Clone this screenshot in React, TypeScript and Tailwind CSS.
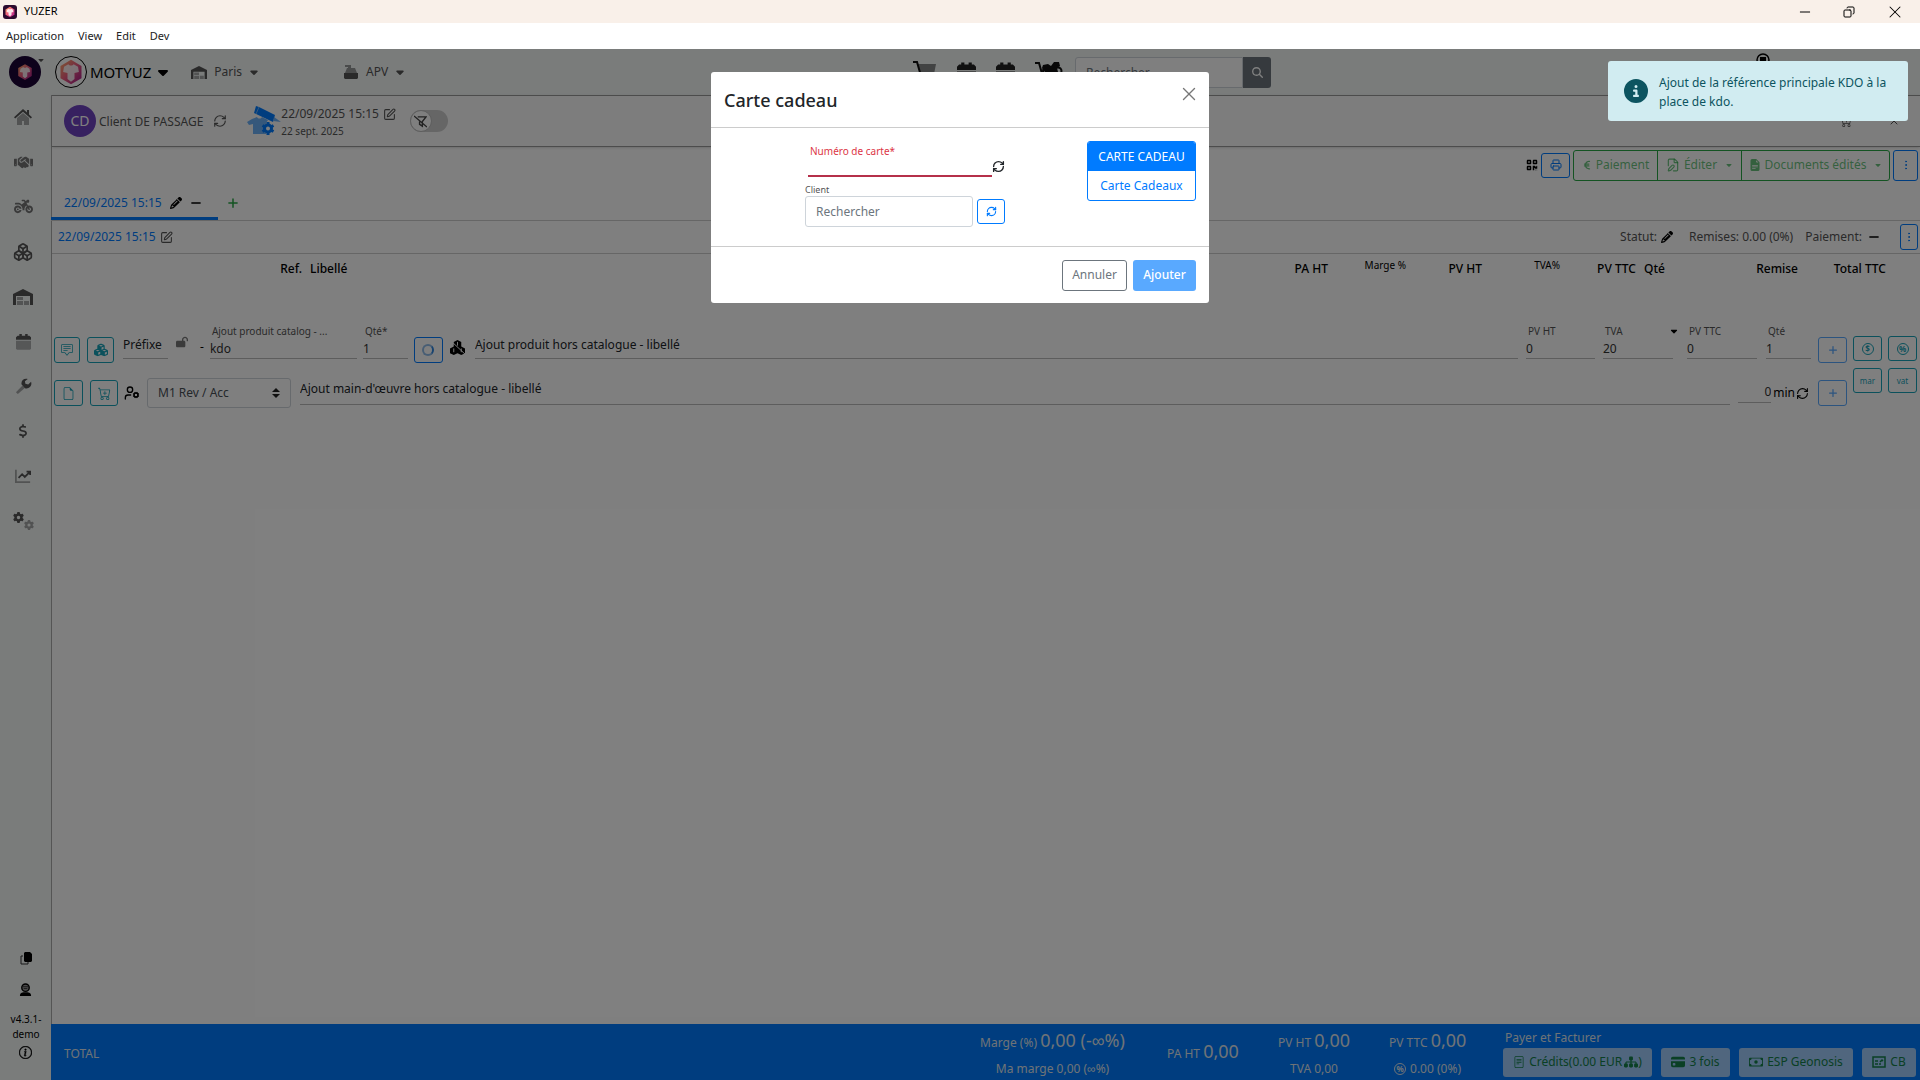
import type { ReactNode } from "react";
import {
  FaCaretDown,
  FaCircleInfo,
  FaCubes,
  FaDollarSign,
  FaEuroSign,
  FaGear,
  FaHandshake,
  FaLockOpen,
  FaMagnifyingGlass,
  FaMinus,
  FaMotorcycle,
  FaPencil,
  FaPlus,
  FaQrcode,
  FaSitemap,
} from "react-icons/fa6";
import {
  Boxes,
  Copy,
  EllipsisVertical,
  FilePen,
  Minus,
  Printer,
  RefreshCw,
  SquarePen,
  UserCog,
  X,
} from "lucide-react";
import {
  BsCash,
  BsCartPlus,
  BsChatSquareText,
  BsCreditCardFill,
  BsFileEarmark,
  BsFileEarmarkTextFill,
  BsFileText,
  BsInfoCircle,
} from "react-icons/bs";

const Hexagon = ({ className }: { className: string }) => (
  <svg viewBox="0 0 32 32" className={className}>
    <defs>
      <linearGradient id="hexa" x1="0" y1="0" x2="1" y2="1">
        <stop offset="0" stopColor="#ffb066" />
        <stop offset="0.45" stopColor="#f0607e" />
        <stop offset="1" stopColor="#a3168c" />
      </linearGradient>
    </defs>
    <path d="M16 2 28 9v14l-12 7L4 23V9z" fill="url(#hexa)" />
    <path
      d="M8 10l5-3c1 2 5 2 6 0l5 3 1 6-5 1v7l-4 3-4-3v-7l-5-1z"
      fill="#fff"
      fillOpacity="0.85"
    />
  </svg>
);

const House = () => (
  <svg viewBox="0 0 20 18" className="w-5 h-[18px]" fill="#555">
    <path d="M4 10v7h5v-4h2v4h5v-7l-6-5z" opacity="0.5" />
    <path d="M10 1 1 9.3l1.2 1.3L10 3.8l7.8 6.8L19 9.3l-3-2.8V2h-2v2.600z" />
  </svg>
);

const Warehouse = ({ className }: { className: string }) => (
  <svg viewBox="0 0 20 16" className={className} fill="#555">
    <path d="M0 16V5l10-5 10 5v11h-3V7H3v9z" />
    <path d="M4 8h6v3H4zM4 12h6v4H4zM11 12h5v4h-5z" opacity="0.5" />
  </svg>
);

const Calendar = ({ className, mark }: { className: string; mark?: boolean }) => (
  <svg viewBox="0 0 18 20" className={className} fill="currentColor">
    <path d="M2 3h2V1h3v2h4V1h3v2h2l2 2v3H0V5z" />
    <path d="M0 9h18v9l-1 2H1l-1-2z" opacity="0.45" />
    {mark && <path d="M11 10l-5 6h3v3l5-6h-3z" fill="#fff" />}
  </svg>
);

const Wrench = () => (
  <svg viewBox="0 0 18 18" className="w-[17px] h-[17px]" fill="#555">
    <path d="M8 8 1 15l2 2 8-7z" opacity="0.5" />
    <path d="M17 4l-3 3-3-1-.5-2.500L13.500 1C9 0 6 3 7 7l4 4c4 1 7.500-3 6-7z" />
  </svg>
);

const Chart = () => (
  <svg viewBox="0 0 18 16" className="w-4 h-4" fill="none" stroke="#555" strokeWidth="2">
    <path d="M1 1v14h16" opacity="0.5" />
    <path d="M4 10l4-4 3 3 6-6M13 3h4v4" />
  </svg>
);

const Cogs = () => (
  <span className="flex text-[#555]">
    <FaGear className="size-[11px]" />
    <FaGear className="size-[10px] mt-2 opacity-50" />
  </span>
);

const CashRegister = () => (
  <svg viewBox="0 0 14 14" className="size-[14px]" fill="#555">
    <path d="M1 0h6v3h4l2 5H1l2-5h1V2H1z" opacity="0.6" />
    <path d="M0 8h14v5l-1 1H1l-1-1z" />
  </svg>
);

const Cart = () => (
  <svg viewBox="0 0 24 22" className="w-6 h-[22px]">
    <path d="M5 3h18l-2 10H7z" fill="#555" opacity="0.7" />
    <path d="M0 1h4l4 14h13" fill="none" stroke="#111" strokeWidth="2" />
    <circle cx="9" cy="19" r="2" />
    <circle cx="18" cy="19" r="2" />
  </svg>
);

const MotoCart = () => (
  <svg viewBox="0 0 28 22" className="h-[22px] w-7">
    <path d="M0 2h4l4 14h14" fill="none" stroke="#111" strokeWidth="2" />
    <path d="M8 4l5-1 3 2 3-4h5l1 4-3 2 1 4H10L7 7z" fill="#111" />
    <circle cx="11" cy="10" r="3" fill="none" stroke="#111" strokeWidth="2" />
    <circle cx="23" cy="10" r="3.500" fill="none" stroke="#111" strokeWidth="2" />
    <circle cx="9" cy="20" r="2" />
    <circle cx="19" cy="20" r="2" />
  </svg>
);

const Workshop = () => (
  <svg viewBox="0 0 34 30" className="w-[34px] h-[30px]">
    <path d="M9 0l3 1 16 8-2 7L7 7z" fill="#007bff" />
    <path d="M12 1l-3 7" stroke="#6db0f7" strokeWidth="1" />
    <path d="M5 13l5-2c1 2 4 2 5 0l6 3-2 3v11H6V18l-4 1-2-3z" fill="#6db0f7" />
    <path d="M27 11l7 5-8-1z" fill="#6db0f7" />
    <g stroke="#007bff" strokeWidth="3">
      <path d="M21 16v13M15.500 19.500l11 6M26.500 19.500l-11 6" />
    </g>
    <circle cx="21" cy="22.500" r="3.500" fill="#fff" stroke="#007bff" strokeWidth="3" />
  </svg>
);

const FilterSlash = () => (
  <svg viewBox="0 0 14 14" className="size-[13px]" fill="none" stroke="#444" strokeWidth="1.500">
    <path d="M4 2h9L9 7v5L6 10V7M0 1l14 12" />
  </svg>
);

const CopyIcon = () => (
  <svg viewBox="0 0 12 13" className="mb-[18px] h-[13px] w-3">
    <path d="M3 4H1v8h7v-2" fill="none" stroke="#333" strokeWidth="1" />
    <path d="M5 0h5l2 2v7l-1 1H5L4 9V1z" />
  </svg>
);

const CardTerminal = () => (
  <svg viewBox="0 0 14 12" className="h-3 w-[14px]" fill="none" stroke="currentColor">
    <path d="M1 1h12v10H1zM3 8h3M7 8h2M3 5h3M8 6l2-2 1 1" strokeWidth="1.500" />
  </svg>
);

const Coin = ({ sign }: { sign: string }) => (
  <span className="flex size-3 items-center justify-center rounded-full border border-current text-[8px] font-bold">
    {sign}
  </span>
);

type ButtonProps = { children: ReactNode; className: string; label?: string };

const OutlineButton = ({ children, className, label }: ButtonProps) => (
  <button
    type="button"
    aria-label={label}
    className={`flex shrink-0 items-center justify-center rounded-[3px] border ${className}`}
  >
    {children}
  </button>
);

type FieldProps = { id: string; label: string; value: string; className: string };

const Field = ({ id, label, value, className }: FieldProps) => (
  <div className={`mb-1 flex shrink-0 flex-col border-b border-[#bbb] ${className}`}>
    <label htmlFor={id} className="pl-0.5 text-[10px] leading-[14px] text-[#555] whitespace-nowrap">
      {label}
    </label>
    <input id={id} defaultValue={value} className="h-5 w-full text-xs text-[#333] outline-none" />
  </div>
);

const EmptyField = ({ label, className }: { label: string; className: string }) => (
  <input
    aria-label={label}
    placeholder={label}
    className={`mb-1 border-b border-[#bbb] text-xs outline-none placeholder:text-[#212529] ${className}`}
  />
);

const menu = ["Application", "View", "Edit", "Dev"];

const Sidebar = () => (
  <nav className="flex w-[52px] shrink-0 flex-col items-center border-r border-[#aaa] bg-[#f4f8f7] pr-[5px] text-[#555]">
    <div className="grid h-[448px] grid-rows-10 place-items-center">
      <House />
      <FaHandshake className="size-[19px] opacity-80" />
      <FaMotorcycle className="size-[19px] opacity-80" />
      <Boxes className="size-5" />
      <Warehouse className="w-5 h-4" />
      <Calendar className="w-[15px] h-[17px]" />
      <Wrench />
      <FaDollarSign className="size-[14px]" />
      <Chart />
      <Cogs />
    </div>
    <div className="mt-auto flex flex-col items-center pb-[21px] pl-1.5 text-[10px] leading-[15px] text-black">
      <CopyIcon />
      <svg viewBox="0 0 14 14" className="mb-4 size-[13px]">
        <circle cx="7" cy="5" r="4" fill="#999" stroke="#000" strokeWidth="1.500" />
        <path d="M4 4h6M5 6h4" stroke="#333" strokeWidth="1" />
        <path d="M1 14c0-4 3-4 6-4s6 0 6 4z" />
      </svg>
      <span>v4.3.1-</span>
      <span>demo</span>
      <BsInfoCircle className="mt-1 size-[13px]" strokeWidth={0.5} />
    </div>
  </nav>
);

const TopBar = () => (
  <header className="flex h-[46px] shrink-0 items-center bg-[#f4f8f7] text-xs text-[#555]">
    <div className="flex w-[55px] pl-[9px]">
      <span className="flex size-8 items-center justify-center rounded-full bg-[#1c0436]">
        <Hexagon className="size-[18px]" />
      </span>
      <FaCaretDown className="-ml-1 size-2" />
    </div>
    <button type="button" className="flex items-center text-[15px] text-black">
      <span className="mr-[3px] flex size-8 items-center justify-center rounded-full border border-black bg-white">
        <Hexagon className="size-7" />
      </span>
      MOTYUZ
      <FaCaretDown className="ml-1 size-4" />
    </button>
    <button type="button" className="ml-5 flex items-center">
      <Warehouse className="mr-[7px] w-4 h-[13px]" />
      Paris
      <FaCaretDown className="ml-1.5 size-3" />
    </button>
    <button type="button" className="ml-[84px] flex items-center">
      <CashRegister />
      <span className="ml-2">APV</span>
      <FaCaretDown className="ml-1.5 size-3" />
    </button>
    <div className="absolute left-1/2 flex -translate-x-[47px] items-center gap-5 text-[#222]">
      <Cart />
      <Calendar className="w-[19px] h-[22px]" />
      <Calendar className="w-[19px] h-[22px]" mark />
      <MotoCart />
      <form className="-ml-2 flex">
        <input
          aria-label="Rechercher"
          placeholder="Rechercher"
          className="h-[31px] w-[168px] rounded-l-[3px] border border-[#ced4da] bg-white px-2.5 text-xs placeholder:text-[#6c757d]"
        />
        <button
          type="button"
          aria-label="Lancer la recherche"
          className="flex h-[31px] w-7 items-center justify-center rounded-r-[3px] bg-[#6c757d] text-white"
        >
          <FaMagnifyingGlass className="size-[11px]" />
        </button>
      </form>
    </div>
    <svg viewBox="0 0 14 14" className="mr-[150px] mb-6 ml-auto size-[14px]">
      <circle cx="7" cy="7" r="6" fill="none" stroke="#000" strokeWidth="1.500" />
      <path d="M4 4h6v4H4z" />
    </svg>
  </header>
);

const ClientBar = () => (
  <div className="flex h-[52px] shrink-0 items-center border-y border-[#999] bg-[#fbfbfb] pl-3 text-xs text-[#555] shadow-sm">
    <span className="flex size-8 items-center justify-center rounded-full bg-[#6f42c1] text-sm text-white">
      CD
    </span>
    <span className="mt-0.5 ml-[3px]">Client DE PASSAGE</span>
    <RefreshCw className="ml-2.5 size-[14px]" />
    <span className="ml-5">
      <Workshop />
    </span>
    <div className="flex flex-col pt-0.5 leading-[18px]">
      <span className="flex items-center gap-1">
        22/09/2025 15:15 <SquarePen className="size-[13px]" />
      </span>
      <span className="text-[10px] leading-4">22 sept. 2025</span>
    </div>
    <button
      type="button"
      role="switch"
      aria-checked="false"
      aria-label="Filtre"
      className="ml-[14px] flex h-[22px] w-[38px] items-center rounded-full bg-[#ccc]"
    >
      <span className="flex size-[22px] items-center justify-center rounded-full border border-[#bbb] bg-white">
        <FilterSlash />
      </span>
    </button>
    <div className="ml-auto flex items-center gap-9 pr-5">
      <BsCartPlus className="size-3" />
      <X className="size-3" />
    </div>
  </div>
);

const Toolbar = () => (
  <div className="flex h-9 shrink-0 items-center justify-end gap-[3px] pr-0.5 text-xs text-[#28a745]">
    <FaQrcode className="size-3 text-black" />
    <OutlineButton label="Imprimer" className="h-[25px] w-[29px] border-[#007bff] text-[#007bff]">
      <Printer className="size-3" />
    </OutlineButton>
    <div className="flex h-[31px] divide-x divide-[#28a745] rounded-[3px] border border-[#28a745]">
      <button type="button" className="flex w-[84px] items-center justify-center gap-1 text-[#28a745]/70">
        <FaEuroSign className="size-[10px]" /> Paiement
      </button>
      <button type="button" className="flex w-[84px] items-center justify-center gap-1 text-[#28a745]/70">
        <FilePen className="size-[14px]" /> Éditer <FaCaretDown className="ml-1 size-2" />
      </button>
      <button type="button" className="flex w-[147px] items-center justify-center gap-1 text-[#28a745]/70">
        <BsFileEarmarkTextFill className="size-3" /> Documents édités
        <FaCaretDown className="ml-1 size-2" />
      </button>
    </div>
    <OutlineButton label="Plus" className="h-[31px] w-[25px] border-[#007bff] text-[#007bff]">
      <EllipsisVertical className="size-3" />
    </OutlineButton>
  </div>
);

const Tabs = () => (
  <div className="-ml-px flex h-[38px] shrink-0 items-end border-b border-[#ccc] text-xs">
    <div className="flex h-8 w-[167px] items-center gap-2 border-b-3 border-[#007bff] pl-[13px]">
      <a href="#devis" className="text-[#007bff]">
        22/09/2025 15:15
      </a>
      <FaPencil className="size-3" />
      <FaMinus className="size-3" />
    </div>
    <button type="button" aria-label="Ajouter un onglet" className="mb-[11px] ml-[9px] text-[#28a745]">
      <FaPlus className="size-3" />
    </button>
  </div>
);

const StatusRow = () => (
  <div className="flex h-[33px] shrink-0 items-center border-b border-[#ccc] pr-0.5 pl-1.5 text-xs text-[#555]">
    <a href="#devis" className="mr-1 text-[#007bff]">
      22/09/2025 15:15
    </a>
    <SquarePen className="size-[13px]" />
    <span className="ml-auto">Statut:</span>
    <FaPencil className="ml-1 size-3 text-black" />
    <span className="ml-4">Remises: 0.00 (0%)</span>
    <span className="ml-3">Paiement:</span>
    <FaMinus className="ml-1.5 size-3 text-black" />
    <OutlineButton label="Options" className="ml-5 h-[26px] w-[18px] border-[#007bff] text-[#007bff]">
      <EllipsisVertical className="size-3" />
    </OutlineButton>
  </div>
);

const LinesTable = () => (
  <table className="w-full table-fixed text-xs text-black">
    <thead>
      <tr className="h-[30px] *:px-1 *:text-right *:font-medium">
        <th className="w-[254px]">Ref.</th>
        <th className="text-left!">Libellé</th>
        <th className="w-20">PA HT</th>
        <th className="w-[78px] pb-1.5 text-[10px] font-normal!">Marge %</th>
        <th className="w-[76px]">PV HT</th>
        <th className="w-[78px] pb-1.5 text-[10px] font-normal!">TVA%</th>
        <th className="w-[76px]">PV TTC</th>
        <th className="w-20 text-left!">Qté</th>
        <th className="w-[82px]">Remise</th>
        <th className="w-[88px]">Total TTC</th>
        <th className="w-[30px]" aria-label="Actions" />
      </tr>
    </thead>
  </table>
);

const teal = "border-[#17a2b8] text-[#17a2b8]";
const blue = "border-[#007bff] text-[#007bff]";

const AddLines = () => (
  <div className="mt-10 flex gap-1.5 pr-[3px] pl-0.5">
    <div className="flex min-w-0 flex-1 flex-col gap-[14px]">
      <div className="flex items-end">
        <OutlineButton label="Commentaire" className={`h-[26px] w-[26px] ${teal}`}>
          <BsChatSquareText className="size-3" />
        </OutlineButton>
        <OutlineButton label="Kit" className={`ml-[7px] h-[26px] w-[27px] ${teal}`}>
          <FaCubes className="size-[14px]" />
        </OutlineButton>
        <EmptyField label="Préfixe" className="ml-[9px] h-7 w-[45px]" />
        <FaLockOpen className="mb-[15px] ml-2 size-3 shrink-0 text-[#777]" />
        <span className="mr-1.5 mb-2 ml-3 text-xs">-</span>
        <Field id="produit" label="Ajout produit catalog - ..." value="kdo" className="w-[147px]" />
        <Field id="quantite" label="Qté*" value="1" className="ml-1.5 w-[45px]" />
        <OutlineButton label="Chargement" className={`ml-1.5 h-[26px] w-[29px] ${blue}`}>
          <span className="size-3 rounded-full border-2 border-[#8fbbe8] border-r-[#2f86e0]" />
        </OutlineButton>
        <svg viewBox="0 0 18 16" className="mb-2 ml-1.5 h-[15px] w-[17px] shrink-0">
          <path d="M9 0l4 2v5l4 2v5l-4 2-4-2-4 2-4-2V9l4-2V2z" />
          <path d="M2 1l15 14M9 2v4M5 9v4M13 9v4" stroke="#fff" strokeWidth="1" />
        </svg>
        <EmptyField label="Ajout produit hors catalogue - libellé" className="ml-[9px] h-7 min-w-0 flex-1" />
        <Field id="pvht" label="PV HT" value="0" className="ml-2 w-[69px]" />
        <div className="ml-2 flex shrink-0 items-start">
          <Field id="tva" label="TVA" value="20" className="w-[70px]" />
          <FaCaretDown className="-ml-1 mt-0.5 size-[10px]" />
        </div>
        <Field id="pvttc" label="PV TTC" value="0" className="ml-2 w-[70px]" />
        <Field id="qte" label="Qté" value="1" className="ml-[9px] w-[45px]" />
        <OutlineButton label="Ajouter le produit" className={`ml-[7px] h-[26px] w-[29px] opacity-65 ${blue}`}>
          <FaPlus className="size-[10px]" />
        </OutlineButton>
      </div>
      <div className="flex items-center">
        <OutlineButton label="Document" className={`h-[26px] w-[29px] ${teal}`}>
          <BsFileEarmark className="size-[13px]" />
        </OutlineButton>
        <OutlineButton label="Panier" className={`ml-[7px] h-[26px] w-7 ${teal}`}>
          <BsCartPlus className="size-[13px]" />
        </OutlineButton>
        <UserCog className="mr-[7px] ml-1.5 size-4 shrink-0" />
        <span className="relative shrink-0">
          <select
            aria-label="Type de main-d'œuvre"
            className="h-[30px] w-36 appearance-none rounded-[3px] border border-[#ced4da] bg-white px-[10px] text-xs text-[#495057]"
          >
            <option>M1 Rev / Acc</option>
          </select>
          <svg viewBox="0 0 8 10" className="pointer-events-none absolute top-[10px] right-[11px] h-[10px] w-2">
            <path d="M0 4l4-4 4 4zM0 6h8l-4 4z" fill="#222" />
          </svg>
        </span>
        <EmptyField
          label="Ajout main-d'œuvre hors catalogue - libellé"
          className="ml-[9px] h-7 min-w-0 flex-1 pb-1"
        />
        <input
          id="minutes"
          defaultValue="0"
          className="mb-0.5 ml-2 h-[22px] w-[33px] border-b border-[#bbb] text-right text-xs text-[#333] outline-none"
        />
        <label htmlFor="minutes" className="ml-0.5 text-xs">
          min
        </label>
        <RefreshCw className="mr-[9px] ml-px size-[13px] shrink-0" />
        <OutlineButton label="Ajouter la main-d'œuvre" className={`h-[26px] w-[29px] opacity-65 ${blue}`}>
          <FaPlus className="size-[10px]" />
        </OutlineButton>
      </div>
    </div>
    <div className="mt-3 grid grid-cols-2 content-start gap-x-1.5 gap-y-[7px] text-[8px]">
      <OutlineButton label="Prix" className={`h-[25px] w-[29px] ${teal}`}>
        <Coin sign="$" />
      </OutlineButton>
      <OutlineButton label="Pourcentage" className={`h-[25px] w-[29px] ${teal}`}>
        <Coin sign="%" />
      </OutlineButton>
      <OutlineButton className={`h-[25px] w-[29px] ${teal}`}>mar</OutlineButton>
      <OutlineButton className={`h-[25px] w-[29px] ${teal}`}>vat</OutlineButton>
    </div>
  </div>
);

const Amount = ({ label, value }: { label: string; value: string }) => (
  <span className="whitespace-nowrap">
    {label} <span className="text-lg leading-[26px]">{value}</span>
  </span>
);

const PayButton = ({ children, className }: { children: ReactNode; className: string }) => (
  <button
    type="button"
    className={`flex h-[29px] items-center justify-center gap-1 rounded-[3px] bg-[#f8f9fa]/65 whitespace-nowrap text-[#14804a] ${className}`}
  >
    {children}
  </button>
);

const Footer = () => (
  <footer className="-ml-px mt-auto flex h-14 shrink-0 items-center bg-[#007bff] pt-1 pr-1 pl-[13px] text-center text-xs leading-[26px] text-[#dfe6ee]">
    <span>TOTAL</span>
    <div className="mr-[39px] ml-auto flex w-[151px] flex-col">
      <Amount label="Marge (%)" value="0,00 (-∞%)" />
      <span>Ma marge 0,00 (∞%)</span>
    </div>
    <div className="mr-10 flex w-[71px] flex-col pb-1">
      <Amount label="PA HT" value="0,00" />
    </div>
    <div className="mr-[39px] flex w-[72px] flex-col">
      <Amount label="PV HT" value="0,00" />
      <span>TVA 0,00</span>
    </div>
    <div className="mr-[37px] flex w-[77px] flex-col">
      <Amount label="PV TTC" value="0,00" />
      <span className="flex items-center justify-center gap-1 whitespace-nowrap">
        <Coin sign="%" /> 0.00 (0%)
      </span>
    </div>
    <div className="flex flex-col pb-1 text-left">
      <span className="pl-0.5 leading-5">Payer et Facturer</span>
      <div className="flex gap-[9px]">
        <PayButton className="w-[149px]">
          <BsFileText className="size-3" />
          <span className="flex items-center">
            Crédits(0.00 EUR <FaSitemap className="ml-0.5 size-[14px]" />)
          </span>
        </PayButton>
        <PayButton className="w-[69px]">
          <BsCreditCardFill className="size-[14px]" /> 3 fois
        </PayButton>
        <PayButton className="w-[114px]">
          <BsCash className="size-[14px]" /> ESP Geonosis
        </PayButton>
        <PayButton className="w-[54px]">
          <CardTerminal /> CB
        </PayButton>
      </div>
    </div>
  </footer>
);

const GiftCardDialog = () => (
  <div
    role="dialog"
    aria-labelledby="dialog-title"
    className="w-[498px] rounded-[3px] bg-white text-xs text-[#212529]"
  >
    <div className="flex h-14 justify-between border-b border-[#ccc] pr-[9px] pl-[13px]">
      <h5 id="dialog-title" className="self-center text-lg font-medium">
        Carte cadeau
      </h5>
      <button type="button" aria-label="Fermer" className="h-11 text-[#777]">
        <X className="size-[22px]" strokeWidth={1.5} />
      </button>
    </div>
    <div className="flex h-[119px] border-b border-[#ccc] pt-[13px] pr-[13px] pl-[94px]">
      <div className="w-[200px]">
        <div className="flex items-end">
          <div className="ml-[3px] flex w-[185px] flex-col border-b-2 border-[#b5304a]">
            <label htmlFor="carte" className="pt-0.5 pl-0.5 text-[10px] leading-4 text-[#dc3545]">
              Numéro de carte*
            </label>
            <input id="carte" className="h-4 outline-none" />
          </div>
          <RefreshCw className="mb-1 size-[13px] shrink-0" strokeWidth={2.5} />
        </div>
        <label htmlFor="client" className="mt-1.5 block text-[9px] leading-[14px] text-[#555]">
          Client
        </label>
        <div className="-mt-px flex items-center gap-1">
          <input
            id="client"
            placeholder="Rechercher"
            className="h-[31px] w-[168px] rounded-[3px] border border-[#ced4da] px-2.5 text-xs placeholder:text-[#6c757d]"
          />
          <OutlineButton label="Actualiser" className={`h-[25px] w-7 ${blue}`}>
            <RefreshCw className="size-[11px]" strokeWidth={2.5} />
          </OutlineButton>
        </div>
      </div>
      <div className="ml-auto flex h-[60px] w-[109px] flex-col overflow-hidden rounded-[3px] border border-[#007bff]">
        <button type="button" className="flex-1 bg-[#007bff] text-white">
          CARTE CADEAU
        </button>
        <button type="button" className="flex-1 text-[#007bff]">
          Carte Cadeaux
        </button>
      </div>
    </div>
    <div className="flex h-14 items-center justify-end gap-1.5 pr-[13px]">
      <OutlineButton className="h-[31px] w-[65px] border-[#6c757d] text-[#6c757d]">Annuler</OutlineButton>
      <button type="button" className="h-[31px] w-[63px] rounded-[3px] bg-[#59a9ff] font-medium text-white">
        Ajouter
      </button>
    </div>
  </div>
);

const Toast = () => (
  <div
    role="status"
    className="absolute top-3 right-3 flex h-[60px] w-[300px] items-center gap-[11px] rounded-[3px] bg-[#d1ecf1] pr-3 pl-4 text-xs leading-[19px] text-[#0c5460]"
  >
    <FaCircleInfo className="size-6 shrink-0" />
    <p className="pt-0.5">Ajout de la référence principale KDO à la place de kdo.</p>
  </div>
);

const App = () => {
  return (
    <div className="flex h-screen min-h-[640px] flex-col bg-white font-['Noto_Sans',sans-serif] antialiased">
      <div className="flex h-[23px] shrink-0 items-center bg-[#f9f0e9] text-[11px] text-black">
        <span className="mr-[7px] ml-[3px] flex size-[14px] items-center justify-center rounded-[3px] bg-[#2b0a2e]">
          <Hexagon className="size-3" />
        </span>
        YUZER
        <div className="ml-auto flex items-center gap-[30px] pr-[15px]">
          <Minus className="size-4" strokeWidth={1.5} />
          <Copy className="size-3 -scale-x-100" />
          <X className="size-5" strokeWidth={1.25} />
        </div>
      </div>
      <div className="flex h-[26px] shrink-0 items-center gap-[14px] pl-1.5 text-[11px] text-[#222]">
        {menu.map((item) => (
          <button key={item} type="button">
            {item}
          </button>
        ))}
      </div>

      <div className="relative flex min-h-0 flex-1 flex-col">
        <TopBar />
        <div className="flex min-h-0 flex-1">
          <Sidebar />
          <main className="flex min-w-0 flex-1 flex-col">
            <ClientBar />
            <Toolbar />
            <Tabs />
            <StatusRow />
            <LinesTable />
            <AddLines />
            <Footer />
          </main>
        </div>
        <div className="absolute inset-0 flex items-start justify-center bg-black/50 pt-[23px]">
          <GiftCardDialog />
        </div>
        <Toast />
      </div>
    </div>
  );
};

export default App;
